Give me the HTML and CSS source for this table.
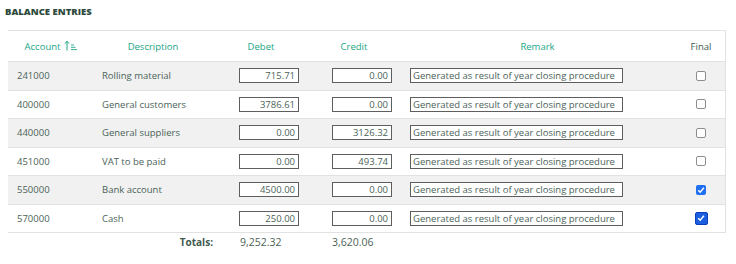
FILE: index.html
```html
<!DOCTYPE html>
<html>
<head>
<meta charset="utf-8">
<link rel="stylesheet" href="styles.css">
</head>
<body>
<h2 class="title">BALANCE ENTRIES</h2>
<div class="grid">
  <div class="row head">
    <div class="c c1 hd">Account <svg class="sort" width="13" height="11" viewBox="0 0 13 11"><path d="M3 10.5V1.2M1 3.6L3 1.2L5 3.6" fill="none" stroke="#22a586" stroke-width="1"/><path d="M7 5h3M7 7.3h4.5M7 9.6h6" stroke="#22a586" stroke-width="0.9"/></svg></div>
    <div class="c c2 hd">Description</div>
    <div class="c c3 hd">Debet</div>
    <div class="c c4 hd">Credit</div>
    <div class="c c5 hd">Remark</div>
    <div class="c c6 hd dark">Final</div>
  </div>
  <div class="row alt">
    <div class="c c1">241000</div><div class="c c2">Rolling material</div>
    <div class="c c3"><span class="inp num">715.71</span></div><div class="c c4"><span class="inp num">0.00</span></div>
    <div class="c c5"><span class="inp txt">Generated as result of year closing procedure</span></div>
    <div class="c c6"><span class="cb"></span></div>
  </div>
  <div class="row">
    <div class="c c1">400000</div><div class="c c2">General customers</div>
    <div class="c c3"><span class="inp num">3786.61</span></div><div class="c c4"><span class="inp num">0.00</span></div>
    <div class="c c5"><span class="inp txt">Generated as result of year closing procedure</span></div>
    <div class="c c6"><span class="cb"></span></div>
  </div>
  <div class="row alt">
    <div class="c c1">440000</div><div class="c c2">General suppliers</div>
    <div class="c c3"><span class="inp num">0.00</span></div><div class="c c4"><span class="inp num">3126.32</span></div>
    <div class="c c5"><span class="inp txt">Generated as result of year closing procedure</span></div>
    <div class="c c6"><span class="cb"></span></div>
  </div>
  <div class="row">
    <div class="c c1">451000</div><div class="c c2">VAT to be paid</div>
    <div class="c c3"><span class="inp num">0.00</span></div><div class="c c4"><span class="inp num">493.74</span></div>
    <div class="c c5"><span class="inp txt">Generated as result of year closing procedure</span></div>
    <div class="c c6"><span class="cb"></span></div>
  </div>
  <div class="row alt">
    <div class="c c1">550000</div><div class="c c2">Bank account</div>
    <div class="c c3"><span class="inp num">4500.00</span></div><div class="c c4"><span class="inp num">0.00</span></div>
    <div class="c c5"><span class="inp txt">Generated as result of year closing procedure</span></div>
    <div class="c c6"><span class="cb on"><svg width="10" height="10" viewBox="0 0 10 10"><path d="M2.2 5.2L4.2 7.2L7.9 2.8" fill="none" stroke="#fff" stroke-width="1.5"/></svg></span></div>
  </div>
  <div class="row">
    <div class="c c1">570000</div><div class="c c2">Cash</div>
    <div class="c c3"><span class="inp num">250.00</span></div><div class="c c4"><span class="inp num">0.00</span></div>
    <div class="c c5"><span class="inp txt">Generated as result of year closing procedure</span></div>
    <div class="c c6"><span class="cb on focus"><svg width="10" height="10" viewBox="0 0 10 10"><path d="M2.2 5.2L4.2 7.2L7.9 2.8" fill="none" stroke="#fff" stroke-width="1.5"/></svg></span></div>
  </div>
</div>
<div class="totals">
  <div class="tl">Totals:</div>
  <div class="tv t3">9,252.32</div>
  <div class="tv t4">3,620.06</div>
</div>
</body>
</html>
```
FILE: styles.css
```css
body {
  margin: 0;
  font-family: "Open Sans", "Liberation Sans", sans-serif;
  color: #4b6358;
  background: #fff;
}
.title {
  margin: 0;
  padding: 5px 0 0 5px;
  height: 30px;
  box-sizing: border-box;
  font-size: 9.5px;
  font-weight: 800;
  color: #2c4a3c;
}
.grid {
  margin-left: 8px;
  width: 718px;
  border-top: 1px solid #e2e2e2;
  border-right: 1px solid #e2e2e2;
  box-sizing: border-box;
}
.row {
  display: grid;
  grid-template-columns: 86px 118px 98px 88px 279px 48px;
  height: 28.5px;
  border-bottom: 1px solid #e2e2e2;
  box-sizing: border-box;
  font-size: 9.5px;
}
.row.head {
  height: 31px;
}
.row.alt { background: #f1f1f1; }
.c {
  display: flex;
  align-items: center;
  white-space: nowrap;
}
.hd {
  justify-content: center;
  color: #22a586;
}
.hd.dark { color: #3f5a4f; }
.sort { margin-left: 4px; margin-top: -1px; }
.c1 { padding-left: 9px; }
.c2 { padding-left: 8px; }
.c1.hd, .c2.hd { padding-left: 0; }
.c3 { justify-content: flex-end; padding-right: 11px; }
.c4 { justify-content: flex-end; padding-right: 6px; }
.c3.hd, .c4.hd { justify-content: center; padding-right: 0; }
.c5 { padding-left: 12px; }
.c5.hd { padding-left: 0; }
.c6 { justify-content: center; }
.inp {
  display: flex;
  align-items: center;
  height: 15px;
  box-sizing: border-box;
  border: 1.5px solid #5e5e5e;
  background: #fff;
  font-size: 9.5px;
  color: #4b6358;
  overflow: hidden;
}
.inp.num {
  width: 60px;
  justify-content: flex-end;
  padding-right: 3px;
}
.inp.txt {
  width: 213px;
  padding-left: 2px;
}
.cb {
  display: flex;
  align-items: center;
  justify-content: center;
  width: 10px;
  height: 10px;
  box-sizing: border-box;
  border: 1px solid #8e8e8e;
  border-radius: 2px;
  background: #fff;
}
.cb.on {
  border: none;
  background: #1f6ff2;
}
.cb.focus {
  width: 13px;
  height: 13px;
  border: 1.5px solid #0b3fb8;
  background: #1b5fe0;
}
.totals {
  display: grid;
  grid-template-columns: 205px 119px 100px;
  margin-left: 8px;
  height: 18px;
  align-items: center;
  font-size: 10.5px;
}
.tl {
  text-align: right;
  font-weight: 700;
  font-size: 10px;
  color: #3f5a4f;
}
.t3 { padding-left: 27px; }
```
